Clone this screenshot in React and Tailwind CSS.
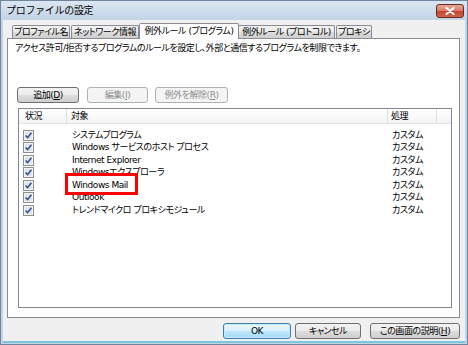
import React from 'react';

const rows = [
  'システムプログラム',
  'Windows サービスのホスト プロセス',
  'Internet Explorer',
  'Windowsエクスプローラ',
  'Windows Mail',
  'Outlook',
  'トレンドマイクロ プロキシモジュール',
];

const tabs = [
  { label: 'プロファイル名', w: 'w-[58px]' },
  { label: 'ネットワーク情報', w: 'w-[68px]' },
  { label: '例外ルール (プログラム)', w: 'w-[100px]', active: true },
  { label: '例外ルール (プロトコル)', w: 'w-[97px]' },
  { label: 'プロキシ', w: 'w-[36px]' },
];

function Check() {
  return (
    <svg width="11" height="11" viewBox="0 0 11 11">
      <rect x="0.5" y="0.5" width="10" height="10" fill="#f4f4f4" stroke="#8f8f8f" />
      <rect x="2" y="2" width="7" height="7" fill="#dfe4ea" />
      <path d="M2.6 5.4 L4.6 7.6 L8.4 2.8" stroke="#2b4f8d" strokeWidth="1.5" fill="none" />
    </svg>
  );
}

function Button({ children, className = '', disabled, primary }) {
  const look = disabled
    ? 'border-[#adb2b5] bg-[#f4f4f4] text-[#8d8d8d]'
    : primary
      ? 'border-[#3c7fb1] bg-[linear-gradient(#eaf6fd_0%,#d9f0fc_50%,#bee6fd_50%,#a7d9f5_100%)] shadow-[inset_0_0_0_1px_#c6ebfd]'
      : 'border-[#707070] bg-[linear-gradient(#f2f2f2_0%,#ebebeb_50%,#dddddd_50%,#cfcfcf_100%)]';
  return (
    <div className={`h-[16px] flex items-center justify-center whitespace-nowrap rounded-[3px] border ${look} ${className}`}>
      {children}
    </div>
  );
}

export default function App() {
  return (
    <div className="w-[468px] h-[345px] flex flex-col bg-[#c3d4e6] border border-[#6f869e] text-[9px] leading-none tracking-[-0.45px] text-black font-['DejaVu_Sans','Noto_Sans_CJK_JP',sans-serif] [font-feature-settings:'palt'] overflow-hidden">
      {/* Title bar */}
      <div className="h-[19px] shrink-0 flex items-center justify-between pl-[5px] pr-[3px] bg-gradient-to-b from-[#dbe6f1] to-[#c3d4e6]">
        <span className="text-[10px] tracking-[-0.3px] [font-feature-settings:normal]">プロファイルの設定</span>
        <div className="w-[28px] h-[14px] rounded-[3px] border border-[#6b2a20] bg-[linear-gradient(#e8a898_0%,#d77a66_50%,#c3432c_50%,#d0644c_100%)] flex items-center justify-center">
          <svg width="10" height="8" viewBox="0 0 10 8">
            <path d="M1.5 1 L8.5 7 M8.5 1 L1.5 7" stroke="#fff" strokeWidth="2" strokeLinecap="round" />
          </svg>
        </div>
      </div>

      {/* Client area */}
      <div className="flex-1 mx-[2px] mb-[1px] bg-[#f0f0f0] flex flex-col pl-[4px] pr-[5px] border-b-2 border-[#7cc6e0]">
        {/* Tabs */}
        <div className="h-[16px] mt-[2px] flex items-end pl-[5px] whitespace-nowrap">
          {tabs.map((t) =>
            t.active ? (
              <div
                key={t.label}
                className={`${t.w} h-[16px] -mb-[1px] mx-[-1px] relative z-10 flex items-center justify-center border border-b-0 border-[#898c95] bg-white rounded-t-[2px]`}
              >
                {t.label}
              </div>
            ) : (
              <div
                key={t.label}
                className={`${t.w} h-[13px] mr-[1px] flex items-center justify-center border border-b-0 border-[#898c95] bg-[linear-gradient(#f2f2f2_0%,#ebebeb_50%,#dddddd_50%,#cfcfcf_100%)] rounded-t-[2px]`}
              >
                {t.label}
              </div>
            )
          )}
        </div>

        {/* Tab panel */}
        <div className="h-[280px] border border-[#898c95] bg-white flex flex-col pl-[7px] pr-[7px]">
          <p className="mt-[5px] h-[10px] whitespace-nowrap">
            アクセス許可/拒否するプログラムのルールを設定し、外部と通信するプログラムを制限できます。
          </p>

          <div className="mt-[33px] flex items-center ml-[2px]">
            <Button className="w-[62px]">
              追加(<span className="underline">D</span>)
            </Button>
            <Button disabled className="w-[61px] ml-[8px]">
              編集(<span className="underline">I</span>)
            </Button>
            <Button disabled className="w-[73px] ml-[7px]">
              例外を解除(<span className="underline">R</span>)
            </Button>
          </div>

          {/* List view */}
          <div className="mt-[5px] ml-[3px] h-[200px] border border-[#828790] bg-white relative">
            <div className="h-[15px] flex bg-[linear-gradient(#ffffff,#f3f4f6)] border-b border-[#e5e5e5]">
              <div className="w-[48px] pl-[6px] flex items-center border-r border-[#dcdcdc]">状況</div>
              <div className="w-[321px] pl-[4px] flex items-center border-r border-[#dcdcdc]">対象</div>
              <div className="w-[49px] pl-[3px] flex items-center border-r border-[#dcdcdc]">処理</div>
            </div>
            <div className="pt-[5px]">
              {rows.map((r) => (
                <div key={r} className="h-[12.5px] flex items-center">
                  <div className="w-[49px] pl-[4px] flex items-center">
                    <Check />
                  </div>
                  <div className="w-[321px] pl-[4px] whitespace-nowrap">{r}</div>
                  <div className="pl-[3px]">カスタム</div>
                </div>
              ))}
            </div>
            <div className="absolute left-[46px] top-[64px] w-[73px] h-[22px] border-[3px] border-[#ff0000] pointer-events-none" />
          </div>
        </div>

        {/* Dialog buttons */}
        <div className="mt-[5px] flex justify-end">
          <Button primary className="w-[68px]">OK</Button>
          <Button className="w-[66px] ml-[4px]">キャンセル</Button>
          <Button className="w-[90px] ml-[9px]">
            この画面の説明(<span className="underline">H</span>)
          </Button>
        </div>
      </div>
    </div>
  );
}
